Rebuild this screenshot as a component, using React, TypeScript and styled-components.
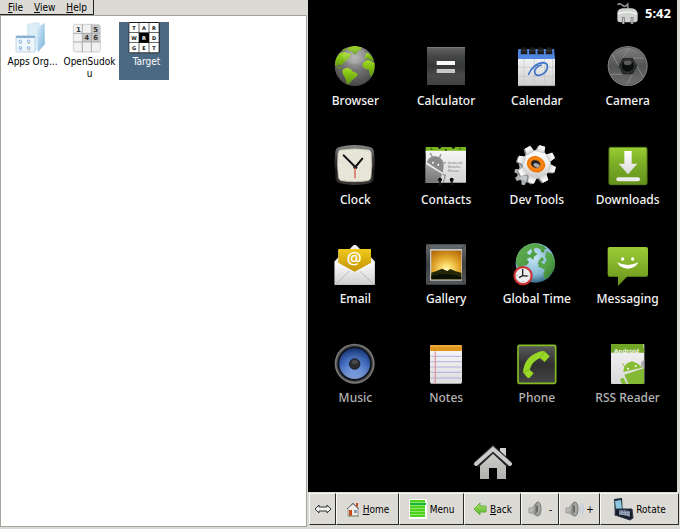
import React from "react";
import styled, { createGlobalStyle } from "styled-components";

const chrome = "#dcdad5";

const GlobalStyle = createGlobalStyle`
  *, *::before, *::after { box-sizing: border-box; }
  body {
    margin: 0;
    background: ${chrome};
    font-family: "DejaVu Sans Condensed", "DejaVu Sans", sans-serif;
    font-size: 10px;
    color: #000;
  }
  button { font: inherit; color: inherit; margin: 0; padding: 0; }
  svg { display: block; flex: none; overflow: visible; }
`;

const Page = styled.div`
  display: grid;
  grid-template-columns: 77fr 93fr;
  min-height: 100vh;
`;

const FilesPane = styled.section`
  display: flex;
  flex-direction: column;
  min-width: 0;
  padding: 0 1px 2px 0;
`;

const MenuRow = styled.div`
  display: flex;
  height: 15px;
`;

const MenuBar = styled.nav`
  display: flex;
  gap: 1px;
  padding: 0 1px 0 3px;
  border-right: 1px solid #222;
  border-bottom: 1px solid #222;
`;

const MenuItem = styled.button`
  border: 0;
  background: none;
  padding: 0 5px;
  line-height: 16px;
`;

const FileArea = styled.div`
  flex: 1;
  display: flex;
  align-items: flex-start;
  align-content: flex-start;
  flex-wrap: wrap;
  gap: 7px;
  padding: 6px 4px;
  background: #fff;
  border: 1px solid #a5a39e;
`;

const FileItem = styled.button<{ $selected?: boolean }>`
  display: flex;
  flex-direction: column;
  align-items: center;
  width: 50px;
  min-height: 58px;
  border: 0;
  background: ${(p) => (p.$selected ? "#4b6983" : "transparent")};
  color: ${(p) => (p.$selected ? "#fff" : "#000")};
`;

const FileLabel = styled.span`
  width: 54px;
  margin: 2px -5px 0 0;
  line-height: 12px;
  text-align: center;
  overflow-wrap: anywhere;
`;

const DevicePane = styled.section`
  display: flex;
  flex-direction: column;
  min-width: 0;
  padding-bottom: 4px;
`;

const Screen = styled.main`
  flex: 1;
  display: flex;
  flex-direction: column;
  margin-right: 3px;
  background: #000;
  color: #fff;
  font-family: "Noto Sans", "Open Sans", sans-serif;
`;

const StatusBar = styled.header`
  display: flex;
  justify-content: flex-end;
  align-items: center;
  gap: 7px;
  height: 26px;
  padding-right: 6px;
`;

const Time = styled.time`
  font: 700 13px/16px "Open Sans", sans-serif;
`;

const AppGrid = styled.div`
  display: grid;
  grid-template-columns: repeat(4, minmax(0, 1fr));
  grid-auto-rows: 99px;
  padding: 19px 4px 0 2px;
`;

const AppTile = styled.button<{ $dim?: boolean }>`
  display: flex;
  flex-direction: column;
  align-items: center;
  gap: 6px;
  border: 0;
  background: none;
  font-size: 12px;
  font-weight: 500;
  line-height: 16px;
  white-space: nowrap;
  color: ${(p) => (p.$dim ? "#b4b4b4" : "#f4f4f4")};
`;

const HomeButton = styled.button`
  align-self: center;
  margin: auto 0 12px;
  border: 0;
  background: none;
`;

const Toolbar = styled.footer`
  display: grid;
  grid-template-columns: 27fr 63fr 65fr 57fr 38fr 41fr 79fr;
  height: 33px;
  padding: 1px 1px 0;
`;

const ToolButton = styled.button<{ $gap?: number }>`
  display: flex;
  align-items: center;
  justify-content: center;
  gap: ${(p) => p.$gap ?? 3}px;
  min-width: 0;
  background: ${chrome};
  border: 1px solid;
  border-color: #f8f8f6 #2a2a2a #2a2a2a #f8f8f6;
  white-space: nowrap;
`;

const Glyphs = styled.g`
  font-family: "DejaVu Sans", sans-serif;
  font-weight: 700;
`;

const AtSign = styled.text`
  font: 600 50px "Open Sans", sans-serif;
  fill: #fff;
`;

type ArtProps = { box: string; size?: number; children: React.ReactNode };

const Art = ({ box, size = 42, children }: ArtProps) => (
  <svg width={size} height={size} viewBox={box} aria-hidden="true">
    {children}
  </svg>
);

const Grad = ({ id, stops, x2 = 0, y2 = 1 }: { id: string; stops: string[]; x2?: number; y2?: number }) => (
  <linearGradient id={id} x1="0" y1="0" x2={x2} y2={y2}>
    {stops.map((c, i) => (
      <stop key={i} offset={i / (stops.length - 1)} stopColor={c} />
    ))}
  </linearGradient>
);

const Radial = ({ id, stops }: { id: string; stops: [number, string][] }) => (
  <radialGradient id={id}>
    {stops.map(([o, c]) => (
      <stop key={o} offset={o} stopColor={c} />
    ))}
  </radialGradient>
);

const Browser = () => (
  <Art box="79 45 126 126">
    <defs>
      <radialGradient id="globe" cx=".5" cy=".28" r=".7">
        <stop offset="0" stopColor="#b0b0b0" />
        <stop offset=".5" stopColor="#737373" />
        <stop offset="1" stopColor="#484848" />
      </radialGradient>
      <Grad id="land" stops={["#a4dc28", "#7cb810", "#5c8c1c"]} />
      <clipPath id="globeClip"><circle cx="141" cy="108" r="60" /></clipPath>
    </defs>
    <circle cx="141" cy="108" r="60" fill="url(#globe)" />
    <g fill="url(#land)" clipPath="url(#globeClip)">
      <path d="M82 104 84 86 96 70 112 66 118 70 126 70 130 76 124 80 126 86 118 88 114 94 108 98 104 104 96 106 92 102 88 108 96 112 104 116 102 118 90 114z" />
      <path d="M118 54 140 47 162 52 158 60 152 62 148 70 140 74 134 66 124 62z" />
      <path d="M106 118 118 113 130 118 134 124 148 130 150 136 142 144 134 150 126 160 118 164 114 148 108 136 104 126z" />
      <path d="M172 94 180 90 188 92 194 96 204 100 202 124 192 142 186 134 184 120 172 116 164 108 166 100z" />
      <path d="M176 68 182 70 194 82 200 94 190 92 182 86 170 86 172 80z" />
      <path d="M102 58 112 52 116 58 108 64z" />
    </g>
    <ellipse cx="141" cy="78" rx="36" ry="24" fill="#fff" opacity=".13" />
  </Art>
);

const Calculator = () => (
  <Art box="351 45 126 126">
    <defs><Grad id="calc" stops={["#636463", "#434644", "#353836", "#494949", "#414141"]} /></defs>
    <rect x="357" y="51" width="114" height="114" fill="url(#calc)" />
    <rect x="357" y="51" width="114" height="3" fill="#777" />
    <rect x="386" y="93" width="55" height="12" fill="#f8f8f8" />
    <rect x="386" y="117" width="55" height="12" fill="#c8c8c8" />
  </Art>
);

const Calendar = () => (
  <Art box="66 45 126 126">
    <defs><Grad id="calPaper" stops={["#f2f2f2", "#cfcfcf"]} /></defs>
    <path d="M72 86H183V168H72z" fill="url(#calPaper)" />
    <path d="M72 112H183M72 139H183M90 87V168M121 87V168M152 87V168M176 87V168" stroke="#c6c6c6" strokeWidth="2" />
    <path d="M75 57H180L183 87H72V60z" fill="#4f86e0" />
    {[81, 106, 131, 156].map((x) => (
      <g key={x}>
        <path d={`M${x} 54q9-5 18 0l1 19h-20z`} fill="#1c1c1c" />
        <path d={`M${x + 2} 62h14`} stroke="#555" strokeWidth="2" />
      </g>
    ))}
    <path d="M104 133C110 115 130 98 148 98C164 99 163 116 153 127C142 137 127 140 123 130C119 119 130 107 142 105" fill="none" stroke="#3d73c8" strokeWidth="5" strokeLinecap="round" />
    <path d="M72 167H183" stroke="#888" strokeWidth="2" />
  </Art>
);

const Camera = () => (
  <Art box="338 45 126 126">
    <defs><Grad id="lens" stops={["#808080", "#525453", "#6c6c6c"]} /></defs>
    <circle cx="400" cy="108" r="60" fill="#858585" />
    <circle cx="400" cy="108" r="56" fill="url(#lens)" stroke="#4c4c4c" strokeWidth="2" />
    <path d="M415 84H449M428 108 446 141M415 133 397 163M385 133H350M373 108 353 71M385 84 404 53" stroke="#9b9b9b" strokeWidth="2" />
    <path d="M385 84H415L428 108 415 133H385L373 108z" fill="#232625" />
    <circle cx="400" cy="107" r="20" fill="#0c0e0d" stroke="#3b3f3d" strokeWidth="3" />
    <ellipse cx="400" cy="98" rx="12" ry="7" fill="#7c7c7c" opacity=".7" />
  </Art>
);

const Clock = () => (
  <Art box="79 42 126 126">
    <defs><Grad id="clockRim" stops={["#8a8a8a", "#3a3a3a", "#171717", "#3b3b3b"]} /></defs>
    <path d="M95 51Q141 39 187 51Q198 54 199 66Q204 106 198 145Q197 157 185 160Q141 170 97 160Q85 157 84 145Q78 106 83 66Q84 54 95 51z" fill="url(#clockRim)" />
    <path d="M97 60Q141 53 185 60Q190 62 191 70Q195 106 190 142Q189 150 182 152Q141 159 100 152Q93 150 92 142Q87 106 91 70Q92 62 97 60z" fill="#e7e5d7" stroke="#b6b4a5" strokeWidth="2" />
    {[[120, 65], [162, 66], [180, 84], [184, 107], [180, 128], [163, 146], [119, 145], [102, 128], [98, 106], [102, 84], [141, 63]].map(([x, y]) => (
      <circle key={`${x}-${y}`} cx={x} cy={y} r="3" fill="#fff" stroke="#cecbbb" />
    ))}
    <path d="M108 76 143 111 164 86" fill="none" stroke="#111" strokeWidth="6" strokeLinecap="round" strokeLinejoin="round" />
    <circle cx="143" cy="112" r="6" fill="#1c1c1c" />
    <path d="M142 113V145" stroke="#dc5b50" strokeWidth="4" />
  </Art>
);

const Contacts = () => (
  <Art box="351 42 126 126">
    <defs>
      <Grad id="card" stops={["#f5f5f5", "#d4d4d4"]} />
      <Grad id="cardBot" stops={["#a5a5a5", "#737373"]} />
      <clipPath id="cardClip"><path d="M353 64H473V158H353z" /></clipPath>
    </defs>
    <path d="M353 51H389L395 57 401 51H430L436 57 442 51H474V70H353z" fill="#79b51e" />
    <path d="M353 62H474V158H353z" fill="url(#card)" />
    <g clipPath="url(#cardClip)">
      <path d="M350 98 402 132 393 160H350z" fill="url(#cardBot)" />
      <path d="M357 97C362 76 390 72 403 91Q410 105 404 128z" fill="#898989" />
      <path d="M374 82 367 70M393 87 398 74M402 102 412 97M404 132 412 136 406 157" fill="none" stroke="#929292" strokeWidth="4" strokeLinecap="round" />
      <circle cx="375" cy="98" r="3" fill="#fff" /><circle cx="391" cy="104" r="3" fill="#fff" />
      <path d="M354 101 405 131" stroke="#eee" strokeWidth="3" />
    </g>
    <Glyphs fontSize="9">
      <text x="367" y="60" fill="#345010">A</text><text x="410" y="62" fill="#345010">B</text><text x="452" y="60" fill="#345010">C</text>
      <g fill="#a0a0a0" fontSize="10"><text x="419" y="101">Android</text><text x="419" y="114">Mobile</text><text x="419" y="127">Phone</text></g>
    </Glyphs>
    <circle cx="396" cy="149" r="6" fill="#0a0a0a" /><circle cx="431" cy="149" r="6" fill="#0a0a0a" />
    <path d="M396 150V166M431 150V166" stroke="#1c1c1c" strokeWidth="6" />
  </Art>
);

const gearTeeth = [0, 45, 90, 135, 180, 225, 270, 315];

const DevTools = () => (
  <Art box="66 42 126 126">
    <defs><Grad id="gear" stops={["#ffffff", "#ededed", "#cacaca"]} /></defs>
    <g fill="#aeb1b2">
      <circle cx="96" cy="131" r="26" />
      {gearTeeth.map((a) => <path key={a} d="M88 109 91 96H101L104 109z" transform={`rotate(${a + 15} 96 131)`} />)}
      <circle cx="94" cy="129" r="22" fill="#c5c8c8" />
    </g>
    <g fill="#858889" transform="translate(-4 2)">
      <circle cx="128" cy="103" r="42" />
      {gearTeeth.map((a) => <path key={a} d="M114 66 119 45H137L142 66z" transform={`rotate(${a + 17} 128 103)`} />)}
    </g>
    <g fill="url(#gear)">
      <circle cx="128" cy="103" r="42" />
      {gearTeeth.map((a) => <path key={a} d="M115 66 119 45H137L141 66z" transform={`rotate(${a + 17} 128 103)`} />)}
    </g>
    <ellipse cx="126" cy="103" rx="28" ry="24" fill="#ef7600" transform="rotate(22 126 103)" />
    <ellipse cx="126" cy="102" rx="20" ry="17" fill="none" stroke="#ff9130" strokeWidth="3" transform="rotate(22 126 102)" />
    <ellipse cx="125" cy="102" rx="14" ry="11" fill="#222" transform="rotate(22 125 102)" />
    <ellipse cx="128" cy="106" rx="10" ry="6" fill="#a9a9a9" transform="rotate(22 128 106)" />
  </Art>
);

const Downloads = () => (
  <Art box="338 42 126 126">
    <defs><Grad id="down" stops={["#98cc33", "#78a926", "#659219"]} /><Grad id="arrow" stops={["#fff", "#dadada"]} /></defs>
    <rect x="344" y="52" width="114" height="112" rx="5" fill="url(#down)" stroke="#5a8419" strokeWidth="3" />
    <path d="M390 63H412V101H429L401 133 373 101H390z" fill="url(#arrow)" />
    <rect x="366" y="142" width="71" height="12" rx="6" fill="#ececec" />
  </Art>
);

const EmailIcon = () => (
  <Art box="79 39 126 126">
    <defs><Grad id="mail" stops={["#f0c91d", "#c49300"]} /><Grad id="env" stops={["#fdfdfd", "#cfcfcf"]} /></defs>
    <path d="M126 57 138 45H145L157 57z" fill="#eee" />
    <path d="M81 94 92 82V60H190V82L201 94V164H81z" fill="url(#env)" />
    <path d="M92 57H190V98L141 126 92 98z" fill="url(#mail)" />
    <AtSign x="140" y="102" textAnchor="middle">@</AtSign>
    <path d="M81 95 141 127 201 95V164H81z" fill="url(#env)" />
    <path d="M86 161 125 124M196 161 157 124" stroke="#aaa" strokeWidth="2" />
    <path d="M81 95 141 127 201 95" fill="none" stroke="#fff" strokeWidth="2" />
  </Art>
);

const Gallery = () => (
  <Art box="351 39 126 126">
    <defs>
      <radialGradient id="sun" cx=".5" cy=".66" r=".75">
        <stop offset="0" stopColor="#fffbd2" /><stop offset=".18" stopColor="#ffe477" /><stop offset=".6" stopColor="#dfa127" /><stop offset="1" stopColor="#b36a0b" />
      </radialGradient>
      <Grad id="frame" stops={["#686b6e", "#3d4043", "#55585a"]} />
    </defs>
    <rect x="354" y="43" width="120" height="121" fill="url(#frame)" />
    <path d="M354 43 368 58M474 43 460 58M354 164 368 151M474 164 460 151" stroke="#26282a" strokeWidth="2" />
    <rect x="366" y="57" width="96" height="95" fill="#c7c7c7" />
    <rect x="370" y="62" width="90" height="86" fill="url(#sun)" />
    <path d="M370 128 384 124 402 116 418 123 427 117 443 124 460 128V148H370z" fill="#242809" />
    <path d="M370 137Q420 125 460 141V148H370z" fill="#0b1004" />
  </Art>
);

const GlobalTime = () => (
  <Art box="66 39 126 126">
    <defs>
      <radialGradient id="world" cx=".45" cy=".35" r=".65"><stop offset="0" stopColor="#c9e7f5" /><stop offset=".7" stopColor="#83b7d2" /><stop offset="1" stopColor="#376c89" /></radialGradient>
      <Grad id="continents" stops={["#68ae55", "#51a247", "#34712d"]} x2={1} />
      <clipPath id="worldClip"><circle cx="124" cy="99" r="59" /></clipPath>
    </defs>
    <circle cx="124" cy="99" r="59" fill="url(#world)" />
    <g fill="url(#continents)" clipPath="url(#worldClip)">
      <path d="M66 98 67 67 93 43 124 39 148 47 158 56 150 60 152 68 142 67 139 57 128 53 119 56 122 67 131 72 120 80 118 90 108 82 98 87 105 97 98 106 86 107 74 115z" />
      <path d="M104 62 112 56 114 67 106 75 98 68z" fill="#b6ddef" />
      <path d="M158 63 173 72 186 95 184 115 172 130 161 145 151 146 148 129 153 119 143 114 132 110 140 98 151 102 158 91 153 79z" />
      <path d="M135 91 144 80 150 89 143 96 136 108 131 100z" />
    </g>
    <circle cx="87" cy="137" r="29" fill="#ce2f2e" />
    <circle cx="87" cy="137" r="23" fill="#eeeef0" stroke="#a83636" />
    <path d="M86 117V137L101 138M86 137 75 143" fill="none" stroke="#242424" strokeWidth="4" />
    <path d="M87 153V156M68 137H71M103 137H106" stroke="#777" strokeWidth="2" />
  </Art>
);

const Messaging = () => (
  <Art box="338 39 126 126">
    <defs><Grad id="speech" stops={["#9ccc38", "#69931a"]} /></defs>
    <path d="M346 51H455Q461 51 461 57V134Q461 140 455 140H398L371 168V140H346Q340 140 340 134V57Q340 51 346 51z" fill="url(#speech)" />
    <circle cx="385" cy="87" r="5" fill="#fff" /><circle cx="415" cy="87" r="5" fill="#fff" />
    <path d="M369 97Q400 113 432 97Q424 115 400 116Q376 115 369 97z" fill="#fff" />
  </Art>
);

const Music = () => (
  <Art box="79 36 126 126">
    <defs>
      <Radial id="cone" stops={[[0, "#b9cbed"], [0.4, "#6d98df"], [0.8, "#3863b4"], [1, "#1f3c7b"]]} />
      <Grad id="musicShade" stops={["#10275c", "#3d68bd", "#bed4fa"]} />
    </defs>
    <circle cx="141" cy="101" r="60" fill="#777" />
    <circle cx="141" cy="101" r="55" fill="#444" />
    <circle cx="141" cy="101" r="51" fill="#0b0f18" />
    <circle cx="141" cy="101" r="46" fill="url(#cone)" />
    <circle cx="141" cy="101" r="46" fill="url(#musicShade)" opacity=".6" />
    <circle cx="141" cy="102" r="16" fill="#282b30" stroke="#111" strokeWidth="2" />
    <ellipse cx="141" cy="96" rx="9" ry="6" fill="#4b4b4b" />
  </Art>
);

const Notes = () => (
  <Art box="351 36 126 126">
    <defs><Grad id="notePaper" stops={["#f7f7f7", "#dedede"]} /></defs>
    <rect x="366" y="45" width="96" height="116" rx="5" fill="url(#notePaper)" />
    <path d="M371 45H457Q462 45 462 50V63H366V50Q366 45 371 45z" fill="#df961e" />
    <path d="M367 48H461" stroke="#f3be55" strokeWidth="3" />
    <path d="M367 79H461M367 95H461M367 111H461M367 127H461M367 144H461" stroke="#9794dc" strokeWidth="2" />
    <path d="M382 64V160" stroke="#df8b94" strokeWidth="3" />
    <path d="M378 64V160" stroke="#efb4b9" strokeWidth="1" />
  </Art>
);

const Phone = () => (
  <Art box="66 36 126 126">
    <defs><Grad id="phoneBody" stops={["#5b5b5b", "#303030", "#444"]} /></defs>
    <rect x="72" y="46" width="113" height="114" rx="4" fill="url(#phoneBody)" stroke="#83bd23" strokeWidth="5" />
    <path d="M87 127Q90 80 136 65Q150 60 154 66L167 79 152 96 138 84Q114 94 107 119L119 130 107 143Q102 145 99 142z" fill="#98d726" />
    <path d="M138 82 152 66M106 119 88 127" stroke="#6da61a" strokeWidth="2" />
  </Art>
);

const RSSReader = () => (
  <Art box="338 36 126 126">
    <defs><Grad id="rssPaper" stops={["#f5f5f5", "#d9d9d9"]} /><clipPath id="rssClip"><path d="M350 68H450V162H350z" /></clipPath></defs>
    <rect x="350" y="42" width="100" height="120" rx="3" fill="url(#rssPaper)" />
    <path d="M353 42H447L450 68H350V45z" fill="#71a526" />
    <Glyphs><text x="359" y="68" fontSize="17" fill="#eef4e2">Android</text></Glyphs>
    <g clipPath="url(#rssClip)">
      <circle cx="452" cy="103" r="12" fill="#aaa" />
      <path d="M387 126C387 97 417 80 443 113z" fill="#86bd34" />
      <path d="M392 111 385 101M414 106 413 94" stroke="#86bd34" strokeWidth="3" strokeLinecap="round" />
      <path d="M390 134 450 114V162H402z" fill="#84b936" />
      <path d="M384 150 394 170" stroke="#84b936" strokeWidth="12" strokeLinecap="round" />
      <circle cx="401" cy="116" r="3" fill="#fff" /><circle cx="424" cy="108" r="3" fill="#fff" />
    </g>
  </Art>
);

const AppsOrganizerIcon = () => (
  <Art box="45 66 96 96" size={32}>
    <defs><Grad id="folderBlue" stops={["#e5f4fc", "#72afd8"]} x2={1} /></defs>
    <path d="M86 73 120 68 123 106 119 151 86 145z" fill="#dceef8" stroke="#c5dce9" strokeWidth="2" />
    <path d="M113 82 137 69V133L117 157z" fill="url(#folderBlue)" />
    <rect x="51" y="107" width="57" height="49" rx="3" fill="#eef7fd" stroke="#a9c4d9" strokeWidth="2" />
    <path d="M51 108H108V114H51z" fill="#86afd2" />
    {[[64, 124], [89, 124], [64, 144], [89, 144]].map(([x, y]) => (
      <g key={`${x}-${y}`}><circle cx={x} cy={y} r="4" fill="none" stroke="#88ade2" strokeWidth="3" /><path d={`M${x - 3} ${y + 6}h8`} stroke={x > 70 ? "#d9ad50" : "#a6bdd4"} strokeWidth="2" /></g>
    ))}
  </Art>
);

const Sudoku = () => (
  <Art box="216 66 96 96" size={32}>
    <rect x="223" y="73" width="81" height="83" rx="7" fill="#f1f1f1" stroke="#bbb" strokeWidth="2" />
    <path d="M278 74H298Q303 74 303 80V99H278zM251 100H303V126H251z" fill="#c7c7c7" />
    <path d="M250 73V156M277 73V156M223 100H304M223 126H304" stroke="#aaa" strokeWidth="3" />
    <Glyphs fontSize="21" fill="#333" textAnchor="middle"><text x="238" y="95">1</text><text x="290" y="95">5</text><text x="263" y="121">4</text><text x="290" y="121">6</text></Glyphs>
  </Art>
);

const Target = () => (
  <Art box="384 66 96 96" size={32}>
    <rect x="386" y="66" width="93" height="94" rx="5" fill="#1b1b1b" />
    <Glyphs fontSize="15" textAnchor="middle">
      {"TARWRDGET".split("").map((letter, i) => {
        const x = 388 + (i % 3) * 30;
        const y = 69 + Math.floor(i / 3) * 30;
        return <g key={i}><rect x={x} y={y} width="28" height="28" fill={i === 4 ? "#000" : "#fff"} /><text x={x + 14} y={y + 20} fill={i === 4 ? "#fff" : "#111"}>{letter}</text></g>;
      })}
    </Glyphs>
  </Art>
);

const PlugIcon = () => (
  <svg width="22" height="24" viewBox="102 2 66 72" aria-hidden="true">
    <path d="M106 13Q114 8 122 15T137 12L138 28" fill="none" stroke="#8d8f8e" strokeWidth="5" />
    <path d="M106 57V37Q108 25 122 24H149Q164 26 167 39V57Q167 66 158 66H114Q106 66 106 57z" fill="#cfd2cf" />
    <path d="M109 40Q136 30 164 40" stroke="#f2f3f1" strokeWidth="5" fill="none" />
    <path d="M124 50V71M150 50V71" stroke="#707371" strokeWidth="8" />
    <path d="M124 52V70M150 52V70" stroke="#ddd" strokeWidth="3" />
  </svg>
);

const HomeShape = () => (
  <svg width="40" height="34" viewBox="0 0 40 34" aria-hidden="true">
    <defs><Grad id="houseGray" stops={["#d1d2cf", "#b0b2af"]} /></defs>
    <path d="M27 2H33V14L27 9zM7 19 20 7 33 19V33H24V22H16V33H7z" fill="url(#houseGray)" />
    <path d="M3 19 20 3 37 19" fill="none" stroke="#222" strokeWidth="7" />
    <path d="M3 18 20 3 37 18" fill="none" stroke="#c9cbc8" strokeWidth="4" strokeLinecap="round" />
  </svg>
);

const ResizeIcon = () => (
  <svg width="18" height="10" viewBox="0 0 18 10" aria-hidden="true">
    <path d="M1 5 5 1V3H13V1L17 5 13 9V7H5V9z" fill="#f4f4f4" stroke="#333" />
  </svg>
);

const HouseIcon = () => (
  <svg width="14" height="15" viewBox="0 0 14 15" aria-hidden="true">
    <path d="M10 1H12V5L10 4z" fill="#c94c21" />
    <path d="M2 6 7 2 12 7V14H2z" fill="#f0ede8" stroke="#999" />
    <path d="M1 7 7 1 13 7" fill="none" stroke="#777" />
    <path d="M3 8H6V14H3z" fill="#c94919" /><path d="M8 8H11V11H8z" fill="#879cad" />
    <path d="M2 14H13" stroke="#83a16e" />
  </svg>
);

const MenuIcon = () => (
  <svg width="18" height="20" viewBox="0 0 18 20" aria-hidden="true">
    <path d="M0 0H18V20H0z" fill="#fff" />
    <path d="M1 1H16V18H1z" fill="#8ee56b" />
    <path d="M1 2H16M1 8H16M1 11H16M1 14H16M1 17H16" stroke="#4fd21e" strokeWidth="2" />
    <path d="M1 5H17" stroke="#18b439" strokeWidth="2" />
  </svg>
);

const BackIcon = () => (
  <svg width="14" height="14" viewBox="0 0 14 14" aria-hidden="true">
    <defs><Grad id="backGreen" stops={["#ade86a", "#55ae25"]} /></defs>
    <path d="M1 7 7 1V4H13V10H7V13z" fill="url(#backGreen)" stroke="#6aac42" strokeLinejoin="round" />
  </svg>
);

const SpeakerIcon = ({ waves }: { waves?: boolean }) => (
  <svg width={waves ? 20 : 14} height="16" viewBox={`0 0 ${waves ? 20 : 14} 16`} aria-hidden="true">
    <defs><Grad id={waves ? "speakerUp" : "speakerDown"} stops={["#ddd", "#888"]} x2={1} /></defs>
    <path d="M1 7H4L9 1V15L4 12H1z" fill={`url(#${waves ? "speakerUp" : "speakerDown"})`} stroke="#999" />
    <ellipse cx="10" cy="8" rx="3" ry="7" fill="#a8a8a3" stroke="#777" />
    <ellipse cx="9" cy="8" rx="1" ry="4" fill="#666" />
    {waves && <path d="M15 4Q17 8 15 12M17 2Q20 8 17 14" stroke="#b9cbe0" fill="none" />}
  </svg>
);

const RotateIcon = () => (
  <svg width="20" height="24" viewBox="0 0 20 24" aria-hidden="true">
    <path d="M1 2 9 1 10 18 2 19z" fill="#1b2939" />
    <path d="M2 4 8 3 9 12 3 13z" fill="#8cc6df" />
    <path d="M3 15H8M3 17H8" stroke="#64798a" />
    <path d="M3 12 19 12 20 21 17 23 2 18z" fill="#171d29" stroke="#313848" />
    <path d="M6 13 17 14V20L6 17z" fill="#617089" />
    <path d="M6 15 17 16M6 17 17 18M9 13V18M12 13V18M15 14V19" stroke="#9fabc0" />
  </svg>
);

const apps: [string, React.FC][] = [
  ["Browser", Browser], ["Calculator", Calculator], ["Calendar", Calendar], ["Camera", Camera],
  ["Clock", Clock], ["Contacts", Contacts], ["Dev Tools", DevTools], ["Downloads", Downloads],
  ["Email", EmailIcon], ["Gallery", Gallery], ["Global Time", GlobalTime], ["Messaging", Messaging],
  ["Music", Music], ["Notes", Notes], ["Phone", Phone], ["RSS Reader", RSSReader],
];

export default function App() {
  return (
    <>
      <GlobalStyle />
      <Page>
        <FilesPane>
          <MenuRow>
            <MenuBar>
              <MenuItem><u>F</u>ile</MenuItem>
              <MenuItem><u>V</u>iew</MenuItem>
              <MenuItem><u>H</u>elp</MenuItem>
            </MenuBar>
          </MenuRow>
          <FileArea>
            <FileItem><AppsOrganizerIcon /><FileLabel>Apps Org...</FileLabel></FileItem>
            <FileItem><Sudoku /><FileLabel>OpenSudoku</FileLabel></FileItem>
            <FileItem $selected><Target /><FileLabel>Target</FileLabel></FileItem>
          </FileArea>
        </FilesPane>
        <DevicePane>
          <Screen>
            <StatusBar><PlugIcon /><Time>5:42</Time></StatusBar>
            <AppGrid>
              {apps.map(([name, Icon], i) => (
                <AppTile key={name} $dim={i >= 12}><Icon />{name}</AppTile>
              ))}
            </AppGrid>
            <HomeButton aria-label="Home screen"><HomeShape /></HomeButton>
          </Screen>
          <Toolbar>
            <ToolButton aria-label="Resize"><ResizeIcon /></ToolButton>
            <ToolButton><HouseIcon /><span><u>H</u>ome</span></ToolButton>
            <ToolButton><MenuIcon />Menu</ToolButton>
            <ToolButton><BackIcon /><span><u>B</u>ack</span></ToolButton>
            <ToolButton $gap={7} aria-label="Volume down"><SpeakerIcon />-</ToolButton>
            <ToolButton $gap={1} aria-label="Volume up"><SpeakerIcon waves />+</ToolButton>
            <ToolButton><RotateIcon />Rotate</ToolButton>
          </Toolbar>
        </DevicePane>
      </Page>
    </>
  );
}
